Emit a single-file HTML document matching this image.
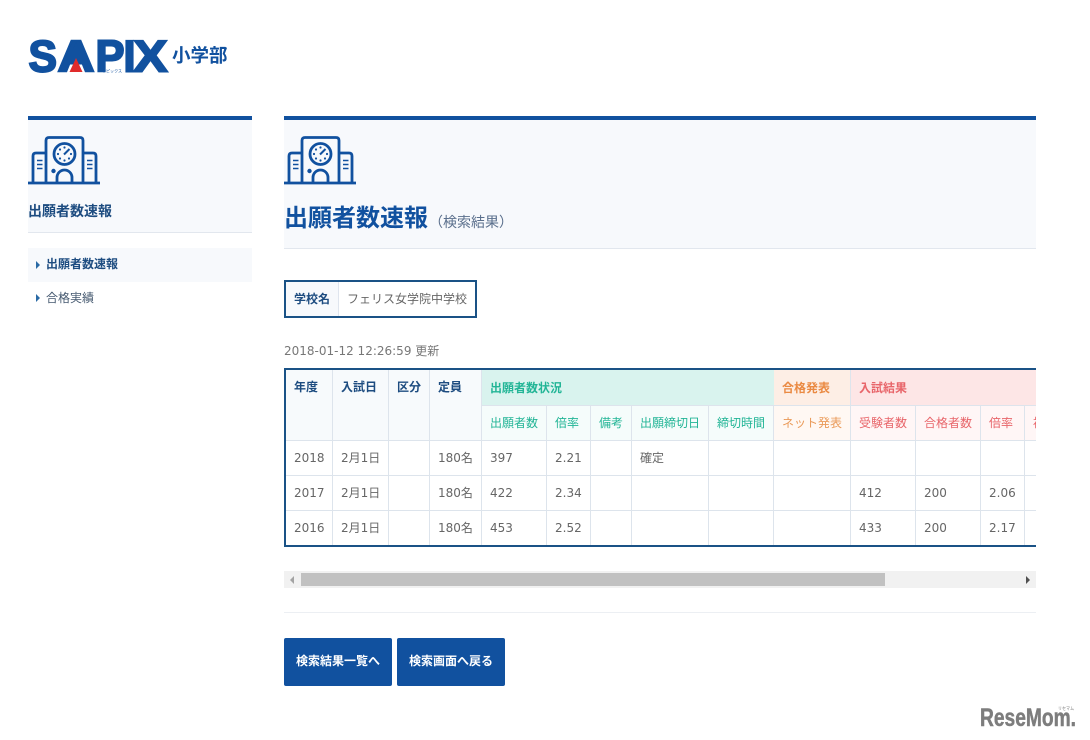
<!DOCTYPE html>
<html lang="ja">
<head>
<meta charset="utf-8">
<title>出願者数速報</title>
<style>
*{box-sizing:border-box}
html,body{margin:0;padding:0;width:1090px;height:740px;overflow:hidden;background:#fff}
body{position:relative;font-family:"DejaVu Sans","Noto Sans CJK JP",sans-serif;font-size:12px;color:#666}
.jp{font-family:"Liberation Sans","Noto Sans CJK JP",sans-serif}
.abs{position:absolute}
.panel{position:absolute;background:#f7f9fc;border-top:4px solid #11519f;border-bottom:1px solid #e2e7ee;top:116px}
.navitem{position:absolute;left:28px;width:224px;height:34px;line-height:34px;padding-left:18px;color:#44586f}
.navitem i{position:absolute;left:8px;top:13px;width:0;height:0;border-left:4px solid #2a6aa5;border-top:4px solid transparent;border-bottom:4px solid transparent}
.school{position:absolute;left:284px;top:280px;width:193px;height:38px;border:2px solid #1a5286;display:flex;line-height:34px}
.school b{width:53px;background:#f7f9fc;border-right:1px solid #dfe5ee;padding-left:8px;color:#1d4c80}
.school span{padding-left:8px;color:#666}
.wrap{position:absolute;left:284px;top:368px;width:752px;height:179px;border:2px solid #1a5286;border-right:0;overflow:hidden}
table{border-collapse:separate;border-spacing:0;table-layout:fixed;width:804px}
th,td{height:35px;padding:0 0 0 8px;border-right:1px solid #dde4ec;border-bottom:1px solid #dde4ec;text-align:left;white-space:nowrap;overflow:hidden;font-weight:normal;line-height:34px}
tr.first th{height:36px}
tr:last-child td{border-bottom:0;height:34px}
.h0{background:#f7fafc;color:#1d4c80;font-weight:bold;vertical-align:top}
.gh{background:#d9f3ee;color:#22b596;font-weight:bold;border-right:0}
.oh{background:#fdeee5;color:#ea8a43;font-weight:bold}
.rh{background:#fde6e6;color:#e8656a;font-weight:bold;border-right:0}
.g{background:#f5fcfb;color:#22b596}
.o{background:#fff8f3;color:#ea9a58}
.r{background:#fff6f6;color:#e8656a}
.sb{position:absolute;left:284px;top:571px;width:752px;height:17px;background:#f1f1f1}
.sb .t{position:absolute;left:17px;top:2px;width:584px;height:13px;background:#c1c1c1}
.sb .l{position:absolute;left:6px;top:5px;border-right:4px solid #a3a3a3;border-top:4px solid transparent;border-bottom:4px solid transparent}
.sb .r2{position:absolute;right:6px;top:5px;border-left:4px solid #505050;border-top:4px solid transparent;border-bottom:4px solid transparent}
.btn{position:absolute;top:638px;width:108px;height:48px;background:#11519f;color:#fff;font-weight:bold;text-align:center;line-height:47px;border-radius:2px}
</style>
</head>
<body>
<svg width="0" height="0" style="position:absolute">
<defs>
<symbol id="bld" viewBox="0 0 72 50">
<g fill="none" stroke="#11519f" stroke-width="2.800">
<path d="M0 47H72" stroke-width="2.800"/>
<path d="M18 46V4.500Q18 1.500 21 1.500H52Q55 1.500 55 4.500V46"/>
<path d="M18 17H8Q5 17 5 20V46M55 17H65Q68 17 68 20V46"/>
<circle cx="36.500" cy="18" r="10.500"/>
<path d="M29 46V41.500A7.500 7.500 0 0 1 44 41.500V46"/>
<path d="M9 24.500H14.500M9 28.500H14.500M9 32.500H14.500M59 24.500H64.500M59 28.500H64.500M59 32.500H64.500" stroke-width="1.600"/>
<path d="M36 18.500L41.500 13" stroke-width="2"/>
</g>
<g fill="#11519f">
<circle cx="25.500" cy="35" r="2.200"/>
<circle cx="36.500" cy="11.500" r="1.100"/><circle cx="36.500" cy="24.500" r="1.100"/><circle cx="30" cy="18" r="1.100"/><circle cx="43" cy="18" r="1.100"/>
<circle cx="32" cy="13.500" r="1.100"/><circle cx="32" cy="22.500" r="1.100"/><circle cx="41" cy="22.500" r="1.100"/>
</g>
</symbol>
</defs>
</svg>

<svg class="abs" style="left:20px;top:30px" width="220" height="50">
<g font-family="Liberation Sans, sans-serif" font-weight="bold" font-size="44.500" fill="#11519f" stroke="#11519f" stroke-width="2">
<text x="8.500" y="41.500" textLength="28.500" lengthAdjust="spacingAndGlyphs">S</text>
<text x="37.500" y="41.500" textLength="37" lengthAdjust="spacingAndGlyphs">A</text>
<text x="75.500" y="41.500" textLength="29" lengthAdjust="spacingAndGlyphs">P</text>
<text x="103.500" y="41.500" textLength="12" lengthAdjust="spacingAndGlyphs">I</text>
<text x="113.500" y="41.500" textLength="34" lengthAdjust="spacingAndGlyphs">X</text>
</g>
<path d="M56 12L47 33H65Z" fill="#11519f"/>
<path d="M49.500 42L56 28L62.500 42Z" fill="#e02b2b"/>
<text x="82" y="42.500" font-size="4" fill="#11519f" font-family="Noto Sans CJK JP, sans-serif" textLength="20" lengthAdjust="spacingAndGlyphs">サピックス</text>
</svg>
<div class="abs jp" style="left:172px;top:43px;font-size:18.500px;line-height:26px;font-weight:bold;color:#11519f;white-space:nowrap">小学部</div>

<div class="panel" style="left:28px;width:224px;height:117px"></div>
<svg class="abs" style="left:28px;top:136px" width="72" height="50"><use href="#bld"/></svg>
<div class="abs jp" style="left:28px;top:200px;font-size:14px;line-height:22px;font-weight:bold;color:#1d4c80">出願者数速報</div>
<div class="navitem jp" style="top:248px;line-height:33px;background:#f7f9fc;color:#1d4c80;font-weight:bold"><i></i>出願者数速報</div>
<div class="navitem jp" style="top:281px"><i></i>合格実績</div>

<div class="panel" style="left:284px;width:752px;height:133px"></div>
<svg class="abs" style="left:284px;top:136px" width="72" height="50"><use href="#bld"/></svg>
<div class="abs jp" style="left:284px;top:202px;font-size:24px;line-height:34px;font-weight:bold;color:#11519f;white-space:nowrap">出願者数速報</div>
<div class="abs jp" style="left:429px;top:212px;font-size:14px;line-height:20px;color:#5a6f8c;white-space:nowrap">（検索結果）</div>

<div class="school jp"><b>学校名</b><span>フェリス女学院中学校</span></div>

<div class="abs" style="left:284px;top:342px;line-height:18px;white-space:nowrap;color:#777">2018-01-12 12:26:59 更新</div>

<div class="wrap">
<table>
<colgroup>
<col style="width:47px"><col style="width:56px"><col style="width:41px"><col style="width:52px"><col style="width:65px"><col style="width:44px"><col style="width:41px"><col style="width:77px"><col style="width:65px"><col style="width:77px"><col style="width:65px"><col style="width:65px"><col style="width:44px"><col style="width:65px">
</colgroup>
<tr class="first">
<th class="h0" rowspan="2">年度</th><th class="h0" rowspan="2">入試日</th><th class="h0" rowspan="2">区分</th><th class="h0" rowspan="2">定員</th>
<th class="gh" colspan="5">出願者数状況</th><th class="oh">合格発表</th><th class="rh" colspan="4">入試結果</th>
</tr>
<tr>
<th class="g">出願者数</th><th class="g">倍率</th><th class="g">備考</th><th class="g">出願締切日</th><th class="g">締切時間</th><th class="o">ネット発表</th><th class="r">受験者数</th><th class="r">合格者数</th><th class="r">倍率</th><th class="r">補欠</th>
</tr>
<tr><td>2018</td><td>2月1日</td><td></td><td>180名</td><td>397</td><td>2.21</td><td></td><td>確定</td><td></td><td></td><td></td><td></td><td></td><td></td></tr>
<tr><td>2017</td><td>2月1日</td><td></td><td>180名</td><td>422</td><td>2.34</td><td></td><td></td><td></td><td></td><td>412</td><td>200</td><td>2.06</td><td></td></tr>
<tr><td>2016</td><td>2月1日</td><td></td><td>180名</td><td>453</td><td>2.52</td><td></td><td></td><td></td><td></td><td>433</td><td>200</td><td>2.17</td><td></td></tr>
</table>
</div>

<div class="sb"><div class="l"></div><div class="t"></div><div class="r2"></div></div>
<div class="abs" style="left:284px;top:612px;width:752px;height:1px;background:#eceff3"></div>

<div class="btn jp" style="left:284px">検索結果一覧へ</div>
<div class="btn jp" style="left:397px">検索画面へ戻る</div>

<svg class="abs" style="left:975px;top:700px" width="110" height="32">
<text x="5" y="26" font-family="Liberation Sans, sans-serif" font-weight="bold" font-size="25" fill="#7d7d7d" stroke="#7d7d7d" stroke-width=".5" textLength="96" lengthAdjust="spacingAndGlyphs">ReseMom.</text>
<text x="83" y="10" font-family="Noto Sans CJK JP, sans-serif" font-size="4.500" fill="#7d7d7d" textLength="16" lengthAdjust="spacingAndGlyphs">リセマム</text>
</svg>
</body>
</html>
